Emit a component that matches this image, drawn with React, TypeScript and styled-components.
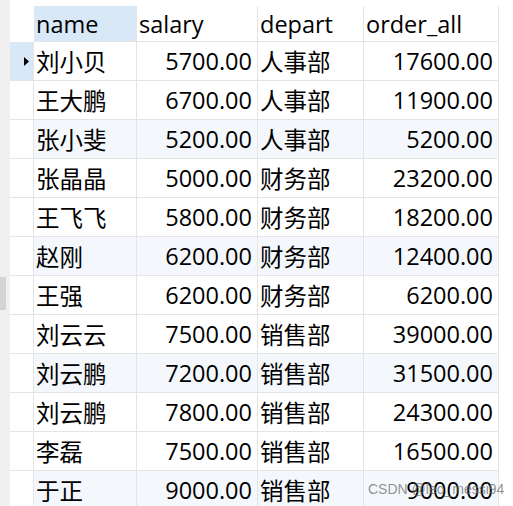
import React from "react";
import styled, { createGlobalStyle } from "styled-components";

const Global = createGlobalStyle`
  html, body { margin: 0; padding: 0; background: #ffffff; overflow: hidden; }
  body { font-family: "Open Sans", "Noto Sans CJK SC", sans-serif; }
`;

const Page = styled.div`
  display: flex;
  width: 513px;
  height: 506px;
  position: relative;
  overflow: hidden;
`;

const LeftStrip = styled.div`
  width: 10px;
  flex: none;
  background: #f0f0f0;
  position: relative;
`;

const Thumb = styled.div`
  position: absolute;
  left: 0;
  top: 277px;
  width: 6px;
  height: 33px;
  background: #d4d4d4;
`;

const Grid = styled.div`
  display: grid;
  grid-template-columns: 24px 103px 121px 106px 135px;
  grid-auto-rows: 39px;
  grid-template-rows: 36px;
  padding-top: 6px;
  align-content: start;
`;

const Cell = styled.div<{ $align?: "left" | "right"; $bg?: string }>`
  box-sizing: border-box;
  border-right: 1px solid #e4e4e4;
  border-bottom: 1px solid #e4e4e4;
  background: ${(p) => p.$bg ?? "transparent"};
  display: flex;
  align-items: center;
  justify-content: ${(p) => (p.$align === "right" ? "flex-end" : "flex-start")};
  padding: ${(p) => (p.$align === "right" ? "0 5px 0 0" : "0 0 0 2px")};
  font-size: 23.5px;
  color: #000;
  white-space: nowrap;
  overflow: hidden;
`;

const Gutter = styled.div<{ $bg?: string; $head?: boolean }>`
  box-sizing: border-box;
  border-right: 1px solid ${(p) => (p.$head ? "transparent" : "#e4e4e4")};
  border-bottom: 1px solid ${(p) => (p.$head ? "transparent" : "#e4e4e4")};
  background: ${(p) => p.$bg ?? "transparent"};
  display: flex;
  align-items: center;
  justify-content: flex-end;
  padding-right: 4px;
`;

const Watermark = styled.div`
  position: absolute;
  left: 368px;
  top: 481px;
  font-family: "Liberation Sans", Arial, sans-serif;
  font-size: 14px;
  color: rgba(110, 110, 110, 0.75);
  white-space: nowrap;
`;

const Arrow = () => (
  <svg width="5" height="9" viewBox="0 0 5 9">
    <path d="M0 0 L5 4.5 L0 9 Z" fill="#000" />
  </svg>
);

const rows: [string, string, string, string][] = [
  ["刘小贝", "5700.00", "人事部", "17600.00"],
  ["王大鹏", "6700.00", "人事部", "11900.00"],
  ["张小斐", "5200.00", "人事部", "5200.00"],
  ["张晶晶", "5000.00", "财务部", "23200.00"],
  ["王飞飞", "5800.00", "财务部", "18200.00"],
  ["赵刚", "6200.00", "财务部", "12400.00"],
  ["王强", "6200.00", "财务部", "6200.00"],
  ["刘云云", "7500.00", "销售部", "39000.00"],
  ["刘云鹏", "7200.00", "销售部", "31500.00"],
  ["刘云鹏", "7800.00", "销售部", "24300.00"],
  ["李磊", "7500.00", "销售部", "16500.00"],
  ["于正", "9000.00", "销售部", "9000.00"],
];

const HEAD_BLUE = "#d9e8f7";
const TINT = "#f4f8fc";

export default function App() {
  return (
    <Page>
      <Global />
      <LeftStrip>
        <Thumb />
      </LeftStrip>
      <Grid>
        <Gutter $head />
        <Cell $bg={HEAD_BLUE}>name</Cell>
        <Cell>salary</Cell>
        <Cell>depart</Cell>
        <Cell>order_all</Cell>
        {rows.map((r, i) => {
          const bg = i % 3 === 2 ? TINT : undefined;
          return (
            <React.Fragment key={i}>
              <Gutter $bg={i === 0 ? HEAD_BLUE : undefined}>{i === 0 && <Arrow />}</Gutter>
              <Cell $bg={bg}>{r[0]}</Cell>
              <Cell $bg={bg} $align="right">{r[1]}</Cell>
              <Cell $bg={bg}>{r[2]}</Cell>
              <Cell $bg={bg} $align="right">{r[3]}</Cell>
            </React.Fragment>
          );
        })}
      </Grid>
      <Watermark>CSDN @leo_messi94</Watermark>
    </Page>
  );
}
